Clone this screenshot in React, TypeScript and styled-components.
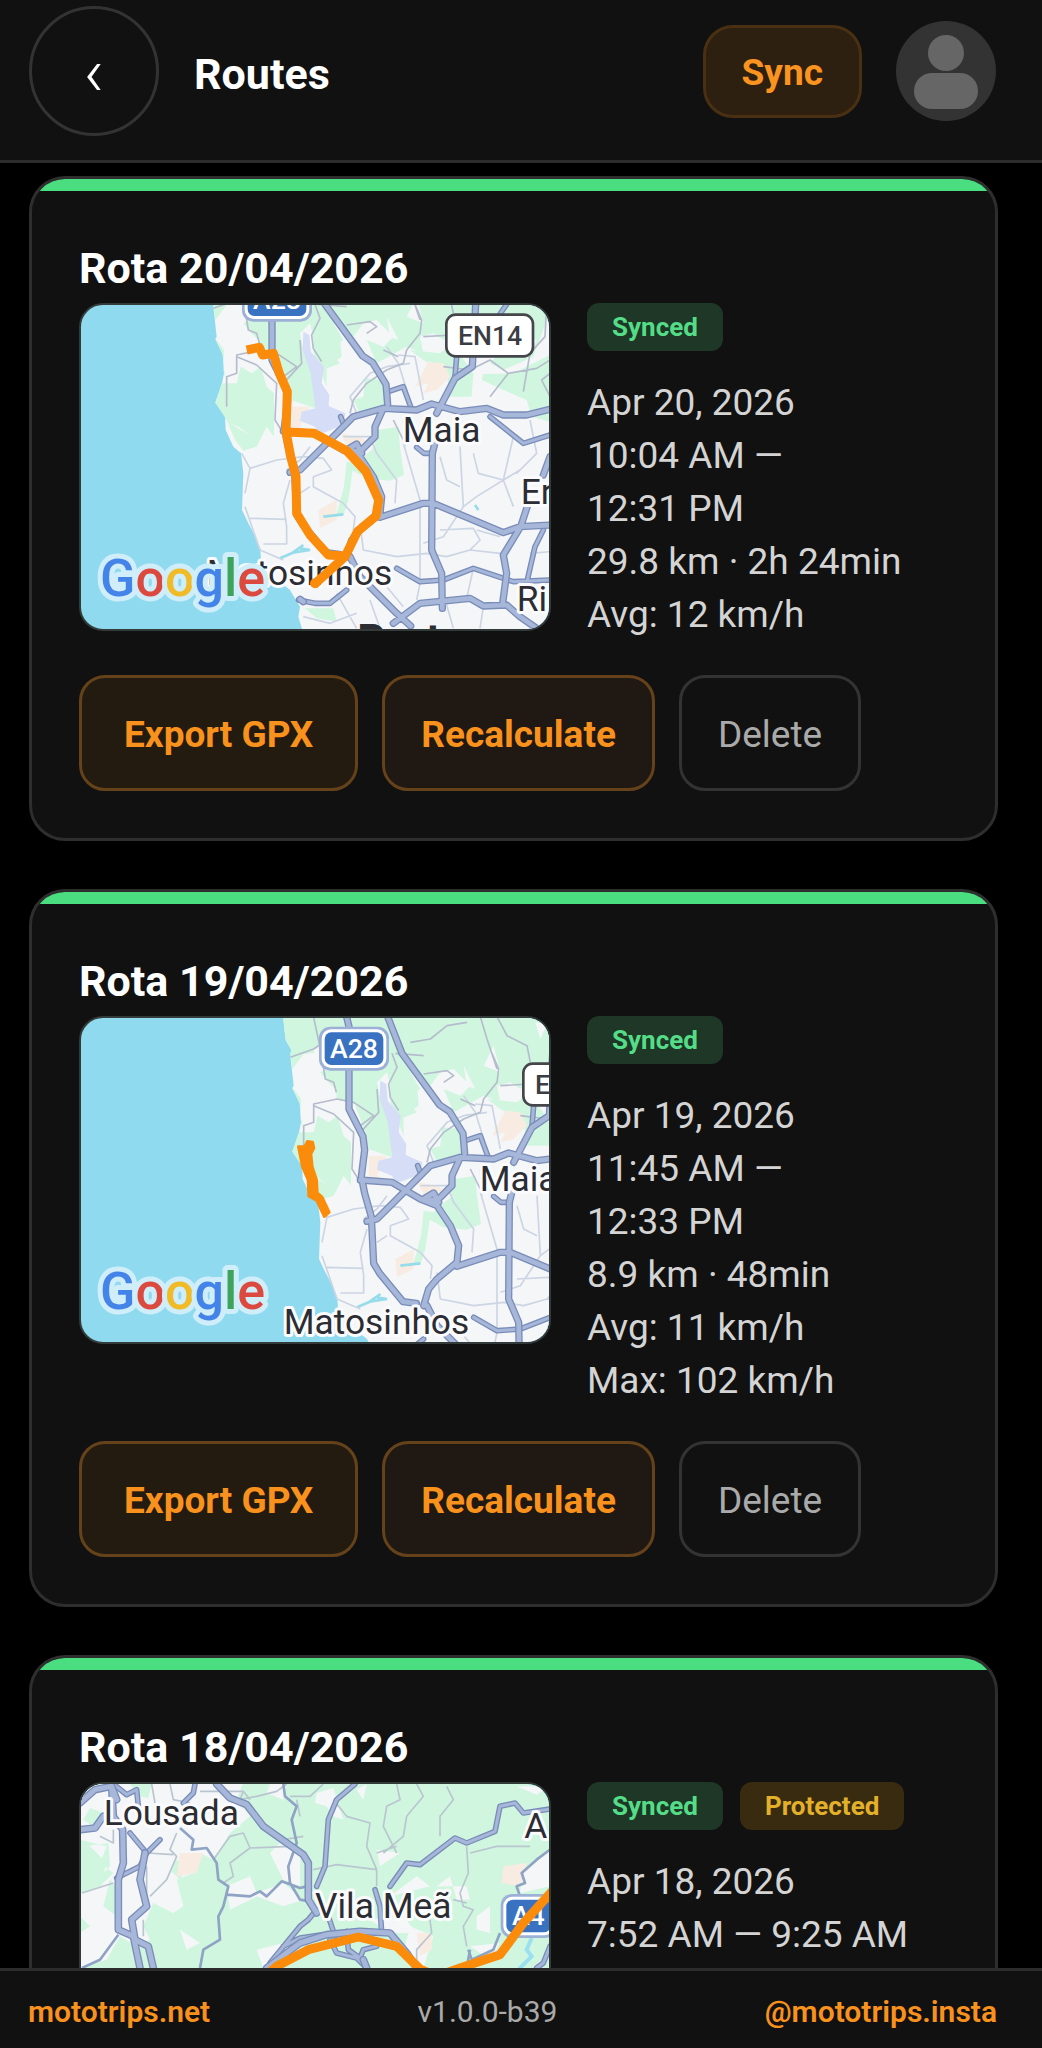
import React from "react";
import styled, { createGlobalStyle, css } from "styled-components";

const GlobalStyle = createGlobalStyle`
  *, *::before, *::after { box-sizing: border-box; }
  body { margin: 0; background: #000; }
  button { font: inherit; margin: 0; cursor: pointer; }
`;

const Screen = styled.div`
  display: flex;
  flex-direction: column;
  height: 100vh;
  background: #000;
  color: #fff;
  font-family: Roboto, "Liberation Sans", sans-serif;
`;

const Header = styled.header`
  flex: none;
  display: flex;
  align-items: center;
  padding: 6px 46px 24px 29px;
  background: #111;
  border-bottom: 3px solid #2c2c2c;
`;

const BackButton = styled.button`
  width: 130px;
  height: 130px;
  padding: 4px 0 0;
  border: 3px solid #333;
  border-radius: 50%;
  background: transparent;
  color: #fff;
  && { font-size: 68px; font-weight: 300; }
  line-height: 1;
`;

const PageTitle = styled.h1`
  flex: 1;
  margin: 0 0 0 35px;
  padding-top: 6px;
  font-size: 43px;
  line-height: 56px;
  font-weight: 700;
`;

const SyncButton = styled.button`
  height: 93px;
  padding: 3px 36px 0;
  border: 3px solid #4a3013;
  border-radius: 30px;
  background: #2e2010;
  color: #fb9320;
  && { font-size: 37px; font-weight: 700; }
`;

const AvatarButton = styled.button`
  width: 100px;
  height: 100px;
  margin-left: 34px;
  padding: 0;
  border: 0;
  border-radius: 50%;
  overflow: hidden;
  background: #333;
  svg { display: block; }
`;

const RouteList = styled.main`
  flex: 1;
  min-height: 0;
  overflow-y: auto;
  scrollbar-width: none;
  display: flex;
  flex-direction: column;
  gap: 48px;
  padding: 13px 44px 48px 29px;
`;

const Card = styled.article`
  flex: none;
  overflow: hidden;
  border: 3px solid #2e2e2e;
  border-radius: 36px;
  background: #111;
`;

const StatusBar = styled.div`
  height: 12px;
  background: #4ade80;
`;

const CardBody = styled.div`
  padding: 49px 47px 47px;
`;

const CardTitle = styled.h2`
  margin: 0 0 7px;
  font-size: 43px;
  line-height: 56px;
  font-weight: 700;
`;

const Summary = styled.div`
  display: flex;
  align-items: flex-start;
  gap: 36px;
`;

const MapFrame = styled.div`
  flex: none;
  width: 472px;
  height: 328px;
  overflow: hidden;
  border: 2px solid #333a3a;
  border-radius: 24px;
  background: #8fdaee;
  svg { display: block; width: 100%; height: 100%; }
`;

const Info = styled.div`
  flex: 1;
  min-width: 0;
  padding-right: 24px;
`;

const Badges = styled.div`
  display: flex;
  gap: 17px;
  margin-bottom: 25px;
`;

const Badge = styled.span<{ $tone: "synced" | "protected" }>`
  padding: 0 25px;
  border-radius: 12px;
  font-size: 26px;
  line-height: 48px;
  font-weight: 700;
  ${({ $tone }) =>
    $tone === "synced"
      ? css`background: #1e3727; color: #54dc86;`
      : css`background: #382b10; color: #e3b02a;`}
`;

const Detail = styled.p`
  margin: 0;
  font-size: 37px;
  line-height: 53px;
  color: #d4d4d4;
`;

const Actions = styled.div`
  display: flex;
  gap: 24px;
  margin-top: 34px;
`;

const ActionButton = styled.button<{ $kind: "export" | "recalculate" | "delete" }>`
  height: 116px;
  padding: 3px 36px 0;
  border: 3px solid #65421a;
  border-radius: 26px;
  && { font-size: 37px; }
  ${({ $kind }) =>
    ({
      export: css`padding: 3px 42px 0; background: #241b10; color: #f8921d; && { font-weight: 700; }`,
      recalculate: css`background: #201812; color: #f8921d; && { font-weight: 700; }`,
      delete: css`background: transparent; border-color: #333; color: #aaa;`,
    })[$kind]}
`;

const Footer = styled.footer`
  flex: none;
  display: flex;
  justify-content: space-between;
  align-items: center;
  height: 80px;
  padding: 4px 45px 0 28px;
  border-top: 3px solid #2c2c2c;
  background: #111;
  font-size: 30px;
  line-height: 40px;
  font-weight: 400;
  color: #aaa;
`;

const FooterLink = styled.a`
  color: #f8921d;
  text-decoration: none;
  font-weight: 600;
`;

/* ---------- map drawing ---------- */

const Roads = ({ d, w = 20 }: { d: string; w?: number }) => (
  <g fill="none" strokeLinejoin="round" strokeLinecap="round">
    <path d={d} stroke="#7a8db8" strokeWidth={w} />
    <path d={d} stroke="#a6b7da" strokeWidth={w - 8} />
  </g>
);

const Streets = ({ d, color = "#ccd5e3", w = 5 }: { d: string; color?: string; w?: number }) => (
  <path d={d} fill="none" stroke={color} strokeWidth={w} strokeLinejoin="round" />
);

const Track = ({ d }: { d: string }) => (
  <path d={d} fill="none" stroke="#fb8c0b" strokeWidth={27} strokeLinejoin="round" strokeLinecap="butt" />
);

const Place = ({ x, y, children }: { x: number; y: number; children: string }) => (
  <text
    x={x}
    y={y}
    fontSize={106}
    fill="#2b2d33"
    stroke="#fbfbfd"
    strokeWidth={18}
    strokeLinejoin="round"
    paintOrder="stroke"
  >
    {children}
  </text>
);

const Motorway = ({ x, y, w, label }: { x: number; y: number; w: number; label: string }) => (
  <g>
    <rect x={x} y={y} width={w} height={132} rx={34} fill="#9db0d6" />
    <rect x={x + 8} y={y + 8} width={w - 16} height={116} rx={28} fill="#fff" />
    <rect x={x + 17} y={y + 17} width={w - 34} height={98} rx={20} fill="#3a72c2" />
    <text x={x + w / 2} y={y + 94} textAnchor="middle" fontSize={80} fontWeight={500} fill="#fff">
      {label}
    </text>
  </g>
);

const GoogleMark = ({ y }: { y: number }) => (
  <text
    x={90}
    y={y}
    fontSize={156}
    fontWeight={500}
    stroke="#cfeefa"
    strokeWidth={30}
    strokeLinejoin="round"
    paintOrder="stroke"
  >
    <tspan fill="#4484e8">G</tspan>
    <tspan fill="#dc4a3f">o</tspan>
    <tspan fill="#f0bb26">o</tspan>
    <tspan fill="#4484e8">g</tspan>
    <tspan fill="#3fa45b">l</tspan>
    <tspan fill="#dc4a3f">e</tspan>
  </text>
);

const PortoRegion = () => (
  <g>
    <path
      fill="#f5f6f8"
      d="M404 60L408 83 416 153 433 183 430 200 440 290 436 298 458 343 462 400 456 430 436 488 465 525 467 570 490 620 513 640 520 700 516 810 535 850 546 870 571 925 573 960 610 1010 660 1050 690 1100 685 1130 700 1180 1460 1180 1460 60Z"
    />
    <g fill="#d0f6df">
      <path d="M404 60L408 83 416 153 433 183 430 193 436 240 470 195 520 190 545 160 560 230 520 250 540 275 565 300 570 330 640 350 700 330 690 280 720 250 740 330 760 390 810 370 770 330 820 300 790 250 850 290 880 250 920 240 970 290 940 320 890 300 920 370 1010 320 1060 340 1050 290 1090 280 1120 300 1210 240 1250 200 1290 210 1320 150 1360 60Z" />
      <path d="M436 293L458 343 462 400 470 420 460 380 462 330Z" />
      <path d="M436 488L456 430 500 430 512 380 545 400 572 380 590 440 612 460 612 590 590 560 560 620 520 632 495 600 470 540ZM480 550L545 590 505 560Z" fillRule="evenodd" />
      <path d="M660 400L705 400 722 440 735 500 665 480ZM680 330L720 320 735 420 700 410Z" />
      <path d="M625 350L700 330 735 400 735 505 665 480 655 430Z" />
      <path d="M730 280L760 260 810 290 815 350 770 380 770 440 730 340Z" />
      <path d="M885 415L945 420 950 500 870 520 850 480 880 470Z" />
      <path d="M925 570L985 560 990 620 1002 705 960 722 890 715 848 692 835 780 820 828 800 822 822 740 830 665 860 670 910 625Z" />
      <path d="M1020 330L1110 340 1190 280 1230 270 1175 350 1210 400 1205 470 1140 470 1130 400 1060 360Z" />
      <path d="M1240 402L1330 400 1440 345 1440 545 1385 530 1370 480 1300 450 1235 420Z" />
      <path d="M1150 193L1440 193 1430 240 1390 350 1300 390 1260 370 1330 290 1200 300Z" />
      <path d="M705 1105L790 1105 800 1145 740 1135Z" />
    </g>
    <path fill="#f5f6f8" d="M500 175L525 170 530 235 505 215ZM1040 170L1060 250 1010 230ZM1165 100L1200 105 1180 150ZM950 230L985 300 960 290ZM1360 280L1400 300 1370 360Z" />
    <g fill="#f8ece2">
      <path d="M1075 365L1120 370 1140 410 1100 450 1060 460 1075 430 1035 440Z" />
      <path d="M745 810L800 780 800 840 750 865Z" />
      <path d="M665 500L720 500 690 560 740 585 665 560Z" />
      <path d="M810 580L870 590 900 610 830 615Z" />
    </g>
    <path
      fill="#d5def6"
      d="M700 275L718 285 722 335 762 380 755 430 778 465 776 498 826 520 820 555 770 575 745 582 735 560 690 542 695 515 736 505 722 400 698 330Z"
    />
    <path fill="none" stroke="#96dcea" strokeWidth={8} d="M630 955L665 940 700 915M668 938L720 930 690 925M760 830L820 823M1215 795L1225 810" />
    <Streets
      d="M540 685L620 660 700 650 760 655 785 690 730 710 730 740 820 790 855 830 850 870M540 835L650 838M525 800L570 930M580 912L650 912 650 860 640 790 660 720M515 640L540 685 525 760M650 690L690 660 720 620M690 760L720 740M820 590L900 590 920 640 980 720 975 790M860 520L840 470 900 400 950 380 1020 370M985 345L1035 350 1060 480M950 320L985 370 1010 450M1000 610L1050 780 1050 1030 1040 1080M1000 540L1005 620M1170 620L1180 800 1120 890 1060 910M1210 640L1225 700 1300 720 1350 690M1300 720L1220 770 1180 800M1330 590L1300 720 1330 800M870 850L880 930 980 950 1070 940 1130 950 1200 930 1290 940M1110 870L1210 865 1230 900 1200 930M1220 870L1290 890M1380 940L1440 935M570 930L640 960M900 1080L930 1165M950 1040L1000 1100M1120 1060L1150 1165M1210 985L1190 1075M1240 1100L1230 1165M700 1130L780 1150 860 1120M800 1060L860 1165M1380 540L1400 640 1340 700M1110 650L1130 720 1170 740"
    />
    <Streets
      color="#b5bdcc"
      w={5}
      d="M430 205L500 180 545 150M500 85L520 180 535 270 560 280 568 310M470 500L470 410 500 400 500 345 570 330 620 340M500 350L560 375 620 430 615 540 640 580M620 340L680 380 640 410M735 193L750 235 725 285 730 325 755 365M690 300L695 370 640 430M1035 193L1055 240 1050 280 1010 330 1000 370M830 255L900 245 920 260 890 280M1060 290L1150 285M790 160L850 150 900 110 960 100M1000 83L1020 150 1050 240M1050 83L1080 140 1140 170 1150 220M1430 193L1425 290 1380 340 1360 455M1120 380L1200 390 1260 360 1315 400 1260 470M1315 400L1400 385 1440 360M1440 400L1415 420 1440 470M1000 370L950 390 890 430 850 480 840 520M970 540L1000 600M940 330L985 350M745 193L830 200"
    />
    <Roads w={17} d="M955 455L1000 440 1022 500M1040 622L1062 640 1090 640M1260 530L1360 610 1440 585M1310 193L1290 222M685 1080L735 1090 780 1090 830 1050M980 985L1050 1025 1120 1020 1210 985 1330 1025 1440 1020M1420 870L1395 920 1372 1020M1160 350L1155 410M820 550L812 530" />
    <Roads
      w={22}
      d="M765 193L723 86 716 60M765 193L878 348 908 368 948 433 953 493M593 60L606 113 606 360 648 443 653 483 643 563 653 613 673 683 680 823 698 853 768 938 808 943M660 697L690 690 770 610 850 530 940 505 1040 510 1085 492 1170 515 1250 505 1300 525 1370 525 1440 508M940 505L915 560 915 590 870 635 820 630M640 573L735 580 820 630 870 650 910 710 935 770 930 820 870 870 845 900 830 950M930 832L1060 790 1090 790 1300 878 1350 860 1440 855M1097 600L1087 640 1085 930 1115 1000 1117 1105M1217 193L1207 380 1155 415 1100 520M1440 650L1420 705M1375 790L1352 860 1300 945 1310 1000 1298 1090M970 1150L1050 1090 1200 1075 1240 1098 1310 1095 1350 1130 1400 1165M840 950L870 1010 980 1120 1022 1158M830 630L860 612 875 640M690 1078L700 1085"
    />
    <Motorway x={516} y={113} w={210} label="A28" />
    <g>
      <rect x={1129} y={224} width={260} height={125} rx={28} fill="#fff" stroke="#44464b" strokeWidth={8} />
      <text x={1164} y={314} fontSize={80} fontWeight={500} fill="#3b3d42">EN14</text>
    </g>
    <Place x={998} y={607}>Maia</Place>
    <Place x={410} y={1034}>Matosinhos</Place>
  </g>
);

const MapApril20 = () => (
  <svg viewBox="33 195 1404 972" role="img" aria-label="Route map near Matosinhos and Maia">
    <PortoRegion />
    <Place x={1352} y={792}>Er</Place>
    <Place x={1340} y={1114}>Ri</Place>
    <text x={862} y={1242} fontSize={130} fontWeight={700} fill="#2b2d33">Porto</text>
    <Track d="M530 330L568 322 578 345 610 340 628 400 652 455 648 575 662 650 678 710 680 820 720 885 775 945 822 948" />
    <Track d="M648 576L732 580 830 632 888 695 926 780 918 828 862 875 825 950 732 1034" />
    <circle cx={735} cy={1030} r={15} fill="#fb8c0b" />
    <GoogleMark y={1067} />
  </svg>
);

const MapApril19 = () => (
  <svg viewBox="33 204 1404 972" role="img" aria-label="Route map along the coast north of Matosinhos">
    <g transform="translate(231 117)">
      <PortoRegion />
    </g>
    <path fill="#fb8c0b" stroke="#fb8c0b" strokeWidth={8} strokeLinejoin="round" d="M685 590L704 590 712 574 728 576 732 594 723 612 727 650 740 690 742 728 757 742 778 787 763 800 740 752 716 738 714 690 697 650Z" />
    <GoogleMark y={1077} />
  </svg>
);

const MapApril18 = () => (
  <svg viewBox="33 193 1404 972" role="img" aria-label="Route map near Lousada and Vila Meã">
    <rect x={30} y={187} width={1420} height={985} fill="#d0f6df" />
    <g fill="#f5f6f8">
      <path d="M30 187L520 187 500 240 540 290 480 340 430 420 390 400 370 460 320 480 340 560 310 580 250 550 220 620 240 660 200 680 150 650 110 720 30 745 30 640 60 620 30 590 30 520 90 500 130 460 90 430 110 380 30 360ZM50 380L115 370 120 440 80 480Z" fillRule="evenodd" />
      <path d="M740 220L790 205 820 300 790 290 770 260 735 250ZM630 370L690 400 690 500 640 480 600 400ZM470 500L540 470 560 520 640 490 700 540 640 560 560 530 480 570ZM560 690L680 660 640 745 580 745ZM330 630L390 670 350 690ZM860 210L890 193 880 240ZM600 193L650 193 640 240 590 220ZM920 390L990 400 930 440ZM1040 470L960 530 1080 500ZM1100 500L1140 470 1160 540 1200 540 1190 500ZM1220 590L1260 560 1260 640 1220 630ZM1020 620L1090 650 1060 745 1000 700ZM1200 680L1290 670 1260 720ZM1440 200L1340 200 1400 225ZM1440 390L1360 450 1350 520 1440 500ZM900 600L1000 590 1040 640 960 640Z" />
      <path d="M60 600L105 620 80 655ZM90 850L300 900 240 1000ZM700 850L900 900 820 1050Z" />
    </g>
    <g fill="#d0f6df">
      <path d="M30 385L60 380 110 430 95 480 60 500 30 470ZM180 193L245 193 235 235 205 230ZM60 265L100 280 85 330 40 300ZM120 480L140 500 140 590 100 560ZM320 420L350 440 330 480 300 450Z" />
    </g>
    <g fill="#f8ece2">
      <path d="M330 400L400 400 380 460 320 470ZM1300 440L1370 430 1350 500 1295 490ZM1040 640L1085 640 1085 690 1050 710Z" />
    </g>
    <path fill="none" stroke="#9be0f0" strokeWidth={12} d="M1385 655L1370 690 1385 710 1350 745 1340 800" />
    <Streets
      color="#b9c6cf"
      d="M245 193L255 250M300 193L310 240 360 250M390 215L520 215 540 240M520 215L510 240 560 230 620 215 650 193M790 240L830 290 900 310 890 380 920 450M660 230L720 230 760 193M680 240L690 290M640 360L700 350M430 420L480 350 520 340 540 385 660 380M540 385L480 430 490 470 460 490M980 193L990 240 950 260 940 320 970 380 980 400M920 400L980 380M1040 193L1060 230 1010 290 1000 350 940 400M730 450L800 435 920 450 920 500M1130 200L1150 240 1110 290 1110 350M1190 380L1195 460 1170 520 1180 560 1210 570 1180 620 1190 680M1200 400L1280 380 1380 380M320 340L300 390 320 410 290 480 240 530M230 400L310 405M220 600L220 650M230 440L230 530M36 520L130 490M90 350L130 370 130 330M1080 600L1085 640 1040 690 1040 745M1150 540L1190 550"
    />
    <Streets
      color="#8fa3c4"
      w={8}
      d="M330 325L370 360 365 390 410 385 440 430 445 480 475 500 460 560 445 590 450 660 400 690 390 745M470 525L540 530 570 515 590 530 635 485 690 505 710 500M640 193L645 230 680 260 665 300 680 370 655 440 660 490 690 540 720 545M145 645L90 720 36 745M1440 390L1400 420 1355 460 1365 490 1340 500 1350 530M1195 690L1205 720 1270 690 1290 640M1200 690L1190 745"
    />
    <Roads
      w={17}
      d="M375 193L370 220 340 250M130 193L170 225 200 210 205 260M270 360L230 400 210 440 140 475M180 340L230 400M740 500L765 440 775 300 800 240 855 193M740 570L715 600 690 620 600 730M960 500L1010 430 1050 435 1155 355 1190 370 1275 335 1290 260 1335 250 1360 280 1440 268M915 510L930 560 935 640M775 590L795 650M640 680L690 655 760 645M780 660L800 700 860 715 890 745M830 635L835 690 870 715 880 690 920 680M1440 680L1420 730 1400 745"
    />
    <Roads
      w={23}
      d="M30 250L75 210 125 200 140 240M30 330L75 325 100 290M125 200L130 290 158 330 160 430 145 480 145 630 190 650 210 745M225 400L210 480 230 560 185 600 195 660 235 680 250 745M440 193L480 235 530 255 580 320 700 405 715 430 715 540 740 580M590 745L690 670 770 645 870 635 960 640 1010 700 1040 745M880 720L890 745"
    />
    <Place x={101} y={317}>Lousada</Place>
    <Place x={735} y={594}>Vila Meã</Place>
    <Place x={1363} y={355}>A</Place>
    <Motorway x={1292} y={523} w={166} label="A4" />
    <Track d="M560 790L620 740 715 690 865 652 980 680 1050 748 1100 770 1170 745 1290 705 1360 610 1460 500" />
    <GoogleMark y={1067} />
  </svg>
);

/* ---------- content ---------- */

interface Trip {
  title: string;
  map: React.ReactNode;
  isProtected?: boolean;
  details: string[];
}

const trips: Trip[] = [
  {
    title: "Rota 20/04/2026",
    map: <MapApril20 />,
    details: ["Apr 20, 2026", "10:04\u00a0AM — 12:31\u00a0PM", "29.8 km · 2h 24min", "Avg: 12 km/h"],
  },
  {
    title: "Rota 19/04/2026",
    map: <MapApril19 />,
    details: ["Apr 19, 2026", "11:45\u00a0AM — 12:33\u00a0PM", "8.9 km · 48min", "Avg: 11 km/h", "Max: 102 km/h"],
  },
  {
    title: "Rota 18/04/2026",
    map: <MapApril18 />,
    isProtected: true,
    details: ["Apr 18, 2026", "7:52\u00a0AM — 9:25\u00a0AM"],
  },
];

const RouteCard = ({ trip }: { trip: Trip }) => (
  <Card>
    <StatusBar />
    <CardBody>
      <CardTitle>{trip.title}</CardTitle>
      <Summary>
        <MapFrame>{trip.map}</MapFrame>
        <Info>
          <Badges>
            <Badge $tone="synced">Synced</Badge>
            {trip.isProtected && <Badge $tone="protected">Protected</Badge>}
          </Badges>
          {trip.details.map((line) => (
            <Detail key={line}>{line}</Detail>
          ))}
        </Info>
      </Summary>
      <Actions>
        <ActionButton type="button" $kind="export">Export GPX</ActionButton>
        <ActionButton type="button" $kind="recalculate">Recalculate</ActionButton>
        <ActionButton type="button" $kind="delete">Delete</ActionButton>
      </Actions>
    </CardBody>
  </Card>
);

export default function App() {
  return (
    <Screen>
      <GlobalStyle />
      <Header>
        <BackButton type="button" aria-label="Back">‹</BackButton>
        <PageTitle>Routes</PageTitle>
        <SyncButton type="button">Sync</SyncButton>
        <AvatarButton type="button" aria-label="Profile">
          <svg width="100" height="100" viewBox="0 0 100 100" aria-hidden="true">
            <circle cx="50" cy="32" r="18" fill="#666" />
            <rect x="18" y="52" width="64" height="36" rx="18" fill="#666" />
          </svg>
        </AvatarButton>
      </Header>
      <RouteList>
        {trips.map((trip) => (
          <RouteCard key={trip.title} trip={trip} />
        ))}
      </RouteList>
      <Footer>
        <FooterLink href="#site">mototrips.net</FooterLink>
        <span>v1.0.0-b39</span>
        <FooterLink href="#instagram">@mototrips.insta</FooterLink>
      </Footer>
    </Screen>
  );
}
